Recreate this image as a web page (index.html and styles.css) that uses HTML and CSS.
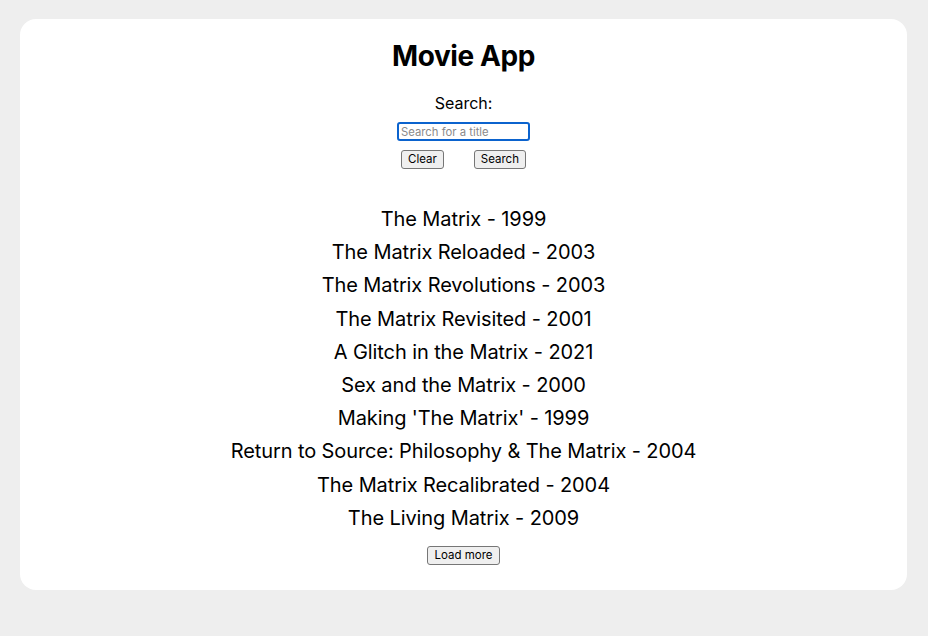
FILE: index.html
```html
<!DOCTYPE html>
<html>
<head>
<meta charset="utf-8">
<link rel="stylesheet" href="styles.css">
</head>
<body>
<main class="card">
  <h1 class="title">Movie App</h1>
  <label class="label" for="q">Search:</label>
  <input class="search" id="q" type="text" placeholder="Search for a title">
  <div class="actions">
    <button class="btn">Clear</button>
    <button class="btn">Search</button>
  </div>
  <ul class="movies">
    <li>The Matrix - 1999</li>
    <li>The Matrix Reloaded - 2003</li>
    <li>The Matrix Revolutions - 2003</li>
    <li>The Matrix Revisited - 2001</li>
    <li>A Glitch in the Matrix - 2021</li>
    <li>Sex and the Matrix - 2000</li>
    <li>Making 'The Matrix' - 1999</li>
    <li>Return to Source: Philosophy &amp; The Matrix - 2004</li>
    <li>The Matrix Recalibrated - 2004</li>
    <li>The Living Matrix - 2009</li>
  </ul>
  <button class="btn">Load more</button>
</main>
</body>
</html>
```
FILE: styles.css
```css
html, body {
  margin: 0;
  padding: 0;
  background: #eeeeee;
  font-family: Inter, "Liberation Sans", sans-serif;
  color: #000;
}
body {
  padding: 19px 21px 0 20px;
}
.card {
  background: #fff;
  border-radius: 16px;
  height: 571px;
  box-sizing: border-box;
  padding: 20px 0 0;
  display: flex;
  flex-direction: column;
  align-items: center;
}
.title {
  margin: 0;
  font-size: 28px;
  line-height: 34px;
  font-weight: 700;
  letter-spacing: -0.4px;
}
.label {
  margin-top: 21px;
  font-size: 16px;
  line-height: 19px;
}
.search {
  margin-top: 9px;
  width: 133px;
  height: 19px;
  box-sizing: border-box;
  border: 2px solid #0b63ce;
  border-radius: 3px;
  padding: 0 2px;
  font-family: inherit;
  font-size: 11.3px;
  outline: none;
}
.search::placeholder {
  color: #8a8a8a;
}
.actions {
  margin-top: 9px;
  display: flex;
  gap: 30px;
}
.btn {
  height: 19px;
  box-sizing: border-box;
  padding: 0 6px;
  font-family: inherit;
  font-size: 11.5px;
  line-height: 15px;
  color: #000;
  background: #efefef;
  border: 1px solid #767676;
  border-radius: 3px;
}
.movies {
  list-style: none;
  margin: 34px 0 11px;
  padding: 0;
  text-align: center;
  font-size: 20px;
  line-height: 33.2px;
  letter-spacing: -0.1px;
}
```
